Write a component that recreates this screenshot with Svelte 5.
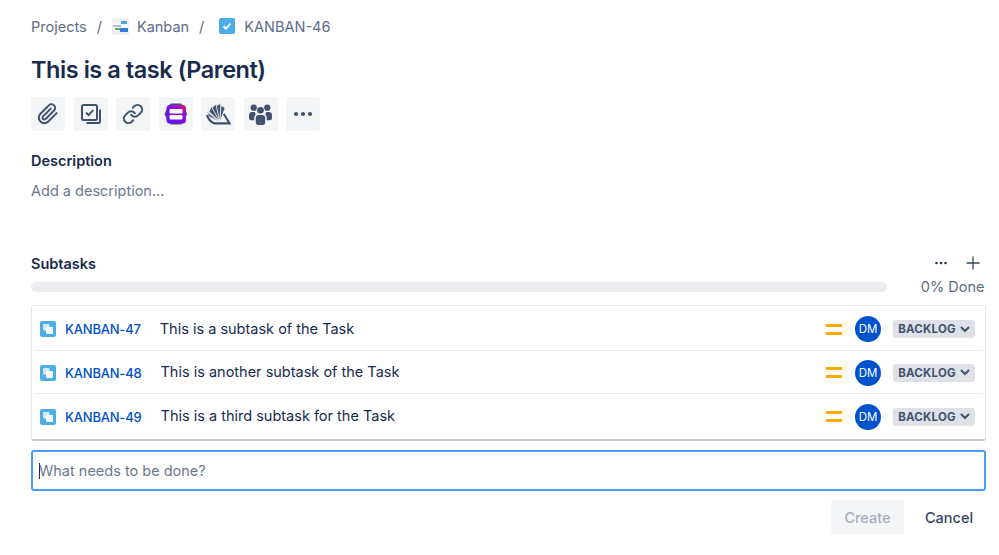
<script>
  const subtasks = [
    { key: "KANBAN-47", title: "This is a subtask of the Task" },
    { key: "KANBAN-48", title: "This is another subtask of the Task" },
    { key: "KANBAN-49", title: "This is a third subtask for the Task" },
  ];
</script>

<div class="page">
  <nav class="crumbs">
    <span>Projects</span>
    <span class="sep">/</span>
    <svg class="board" width="17" height="17" viewBox="0 0 17 17">
      <rect width="17" height="17" rx="2" fill="#eef0f4" />
      <rect x="1" y="4" width="15" height="9" fill="#f7f8f9" />
      <rect x="1" y="7" width="8" height="2" fill="#b9bfc9" />
      <rect x="9" y="3" width="6" height="3" fill="#4b9fe0" />
      <rect x="8" y="10" width="8" height="4" fill="#2f7fdb" />
      <rect x="3" y="10" width="5" height="2" fill="#58b368" />
    </svg>
    <span>Kanban</span>
    <span class="sep">/</span>
    <svg class="type" width="16" height="16" viewBox="0 0 16 16">
      <rect width="16" height="16" rx="2" fill="#4bade8" />
      <path d="M4.5 8.2l2.4 2.4 4.6-5" fill="none" stroke="#fff" stroke-width="2" />
    </svg>
    <span>KANBAN-46</span>
  </nav>

  <h1>This is a task (Parent)</h1>

  <div class="tools">
    <button aria-label="Attach">
      <svg width="22" height="22" viewBox="0 0 24 24" fill="none" stroke="#42526e" stroke-width="2.200" stroke-linecap="round" stroke-linejoin="round">
        <path d="M21.440 11.050l-9.190 9.190a6 6 0 0 1-8.490-8.490l9.190-9.190a4 4 0 0 1 5.660 5.660l-9.200 9.190a2 2 0 0 1-2.830-2.830l8.490-8.480" />
      </svg>
    </button>
    <button aria-label="Child issues">
      <svg width="24" height="24" viewBox="0 0 24 24" fill="none" stroke="#42526e" stroke-width="2">
        <rect x="3" y="3" width="15" height="15" rx="1.500" />
        <path d="M7 10.500l2.600 2.600 4.600-5" />
        <path d="M21 7.500v12a1.500 1.500 0 0 1-1.500 1.500H7.500" />
      </svg>
    </button>
    <button aria-label="Link">
      <svg width="22" height="22" viewBox="0 0 24 24" fill="none" stroke="#42526e" stroke-width="2.200" stroke-linecap="round" stroke-linejoin="round">
        <path d="M10 13a5 5 0 0 0 7.540.540l3-3a5 5 0 0 0-7.070-7.070l-1.720 1.710" />
        <path d="M14 11a5 5 0 0 0-7.540-.540l-3 3a5 5 0 0 0 7.070 7.070l1.710-1.710" />
      </svg>
    </button>
    <button aria-label="Priority app">
      <svg width="26" height="26" viewBox="0 0 26 26">
        <defs>
          <linearGradient id="prio" x1="0" y1="1" x2="1" y2="0">
            <stop offset="0" stop-color="#5a10ff" />
            <stop offset="0.7" stop-color="#8f0fd8" />
            <stop offset="1" stop-color="#f5105a" />
          </linearGradient>
        </defs>
        <path d="M8 2.500h10l3 3 3 7.500-3 7.500-3 3H8l-3-3L1.500 13 5 5.500z" fill="#42526e" />
        <rect x="3.500" y="4" width="19.500" height="18.500" rx="3.500" fill="url(#prio)" />
        <rect x="6.500" y="8" width="13" height="4.500" rx="1" fill="#fff" />
        <rect x="6.500" y="14" width="13" height="4.500" rx="1" fill="#fff" />
      </svg>
    </button>
    <button aria-label="Fan app">
      <svg width="26" height="26" viewBox="0 0 26 26" fill="#42526e" stroke="#f4f5f7" stroke-width="0.700">
        <path d="M15 21L1.500 10.500 4 15.500z" />
        <path d="M15 21L6.500 5.500l-2.400 5.200z" />
        <path d="M15 21L11 3 7.200 7z" />
        <path d="M15 21L15.700 2.300 11.300 5z" />
        <path d="M15 21L20 7l-4-2.700z" />
        <path d="M2 14c1 3.500 4 7 7 8.300h15.500L18.800 13" fill="none" stroke="#42526e" stroke-width="2.200" />
      </svg>
    </button>
    <button aria-label="Watchers">
      <svg width="25" height="25" viewBox="0 0 24 24" fill="#42526e">
        <circle cx="5.500" cy="5.500" r="3" />
        <circle cx="18.500" cy="5.500" r="3" />
        <circle cx="12" cy="8" r="3.200" />
        <path d="M1 12.500a3 3 0 0 1 3-3h2.500a5 5 0 0 0 1 2.500 4 4 0 0 0-1.500 3v2.500H3a2 2 0 0 1-2-2z" />
        <path d="M23 12.500a3 3 0 0 0-3-3h-2.500a5 5 0 0 1-1 2.500 4 4 0 0 1 1.500 3v2.500h3a2 2 0 0 0 2-2z" />
        <path d="M7.500 15.500a3 3 0 0 1 3-3h3a3 3 0 0 1 3 3V20a2 2 0 0 1-2 2h-5a2 2 0 0 1-2-2z" />
      </svg>
    </button>
    <button class="more" aria-label="More">
      <svg width="24" height="24" viewBox="0 0 24 24" fill="#42526e">
        <circle cx="5" cy="12" r="2.100" />
        <circle cx="12" cy="12" r="2.100" />
        <circle cx="19" cy="12" r="2.100" />
      </svg>
    </button>
  </div>

  <h2 class="desc-head">Description</h2>
  <p class="desc">Add a description...</p>

  <div class="sub-head">
    <h2>Subtasks</h2>
    <div class="sub-actions">
      <svg width="14" height="14" viewBox="0 0 14 14" fill="#253858">
        <circle cx="2.500" cy="7" r="1.300" />
        <circle cx="7" cy="7" r="1.300" />
        <circle cx="11.500" cy="7" r="1.300" />
      </svg>
      <svg width="14" height="14" viewBox="0 0 14 14" fill="none" stroke="#344563" stroke-width="1.300">
        <path d="M7 .5v13M.5 7h13" />
      </svg>
    </div>
  </div>

  <div class="progress">
    <div class="bar"></div>
    <span>0% Done</span>
  </div>

  <div class="list">
    {#each subtasks as task}
      <div class="row">
        <svg class="type" width="16" height="16" viewBox="0 0 16 16">
          <rect width="16" height="16" rx="2" fill="#4bade8" />
          <rect x="3" y="3" width="6.500" height="6.500" rx="1" fill="#fff" fill-opacity="0.75" />
          <rect x="6" y="6" width="7" height="7" rx="1" fill="#fff" />
        </svg>
        <a href="#top" class="key">{task.key}</a>
        <span class="title">{task.title}</span>
        <span class="prio"></span>
        <span class="avatar">DM</span>
        <span class="status">
          BACKLOG
          <svg width="10" height="7" viewBox="0 0 10 7" fill="none" stroke="#42526e" stroke-width="2" stroke-linecap="round">
            <path d="M1.500 1.500L5 5l3.500-3.500" />
          </svg>
        </span>
      </div>
    {/each}
  </div>

  <div class="input">
    <span class="caret"></span>
    <span>What needs to be done?</span>
  </div>

  <div class="actions">
    <button class="create" disabled>Create</button>
    <button class="cancel">Cancel</button>
  </div>
</div>

<style>
  :global(body) {
    margin: 0;
    background: #fff;
  }

  .page {
    box-sizing: border-box;
    width: 999px;
    height: 555px;
    overflow: hidden;
    padding: 17px 13px 0 31px;
    font-family: Inter, "Liberation Sans", sans-serif;
    font-size: 14.500px;
    color: #172b4d;
  }

  .crumbs {
    display: flex;
    align-items: center;
    height: 18px;
    color: #5e6c84;
    font-size: 14.500px;
  }

  .sep {
    margin: 0 10px 0 10px;
  }

  .crumbs .board {
    margin-right: 8px;
  }

  .crumbs .type {
    margin: 0 9px 0 5px;
  }

  h1 {
    margin: 20px 0 0;
    font-size: 23.500px;
    line-height: 30px;
    font-weight: 600;
    letter-spacing: -0.45px;
    color: #172b4d;
  }

  .tools {
    display: flex;
    gap: 8.500px;
    margin-top: 12px;
  }

  .tools button {
    display: flex;
    align-items: center;
    justify-content: center;
    width: 34px;
    height: 34px;
    padding: 0;
    border: 0;
    border-radius: 3px;
    background: #f4f5f7;
  }

  h2 {
    margin: 0;
    font-size: 14.500px;
    line-height: 20px;
    font-weight: 600;
    color: #172b4d;
  }

  .desc-head {
    margin-top: 20px;
  }

  .desc {
    margin: 10px 0 0;
    line-height: 20px;
    color: #6b778c;
  }

  .sub-head {
    display: flex;
    align-items: center;
    justify-content: space-between;
    margin-top: 53px;
    height: 20px;
  }

  .sub-actions {
    display: flex;
    align-items: center;
    gap: 18px;
    margin: -2px 6px 0 0;
  }

  .progress {
    display: flex;
    align-items: center;
    justify-content: space-between;
    height: 20px;
    margin-top: 3px;
    padding-right: 1.500px;
    color: #5e6c84;
  }

  .progress span {
    margin-top: -2px;
  }

  .bar {
    width: 856px;
    height: 10px;
    border-radius: 5px;
    background: #ebecf0;
  }

  .list {
    box-sizing: border-box;
    height: 136px;
    margin-top: 8px;
    padding: 1px 2px 0;
    border-radius: 3px;
    border: 1px solid #e6e8ec;
    border-bottom: 2px solid #c9ccd4;
  }

  .row {
    box-sizing: border-box;
    display: flex;
    align-items: center;
    height: 43.500px;
    border-bottom: 1px solid #ebecf0;
    padding: 2px 0 0 6px;
  }

  .row:last-child {
    border-bottom: 0;
  }

  .key {
    margin: 0 19px 0 9px;
    color: #0052cc;
    font-weight: 500;
    font-size: 13px;
    letter-spacing: -0.2px;
    text-decoration: none;
  }

  .title {
    flex: 1;
    margin-top: -2px;
    color: #172b4d;
  }

  .prio {
    box-sizing: border-box;
    width: 16px;
    height: 11px;
    border-top: 3px solid #ffab00;
    border-bottom: 3px solid #ffab00;
  }

  .avatar {
    display: flex;
    align-items: center;
    justify-content: center;
    width: 26px;
    height: 26px;
    margin-left: 13px;
    border-radius: 50%;
    background: #0052cc;
    color: #fff;
    font-size: 11.500px;
  }

  .status {
    display: flex;
    align-items: center;
    justify-content: center;
    gap: 4px;
    width: 82px;
    height: 18px;
    margin: 0 8px 0 12px;
    border-radius: 3px;
    background: #dfe1e6;
    color: #42526e;
    font-size: 11.500px;
    font-weight: 700;
    letter-spacing: 0.2px;
  }

  .input {
    box-sizing: border-box;
    display: flex;
    align-items: center;
    height: 41px;
    margin-top: 9px;
    padding-left: 6px;
    border: 2px solid #4c9aff;
    border-radius: 3px;
    color: #6b778c;
  }

  .caret {
    width: 1px;
    height: 16px;
    margin-right: -1px;
    background: #172b4d;
  }

  .actions {
    display: flex;
    justify-content: flex-end;
    align-items: center;
    gap: 8px;
    margin-top: 9px;
  }

  .actions button {
    height: 34px;
    padding: 0;
    border: 0;
    border-radius: 3px;
    font-family: inherit;
    font-size: 14.500px;
    font-weight: 500;
  }

  .create {
    width: 73px;
    background: #f4f5f7;
    color: #a5adba;
  }

  .cancel {
    width: 74px;
    background: none;
    color: #344563;
  }
</style>
